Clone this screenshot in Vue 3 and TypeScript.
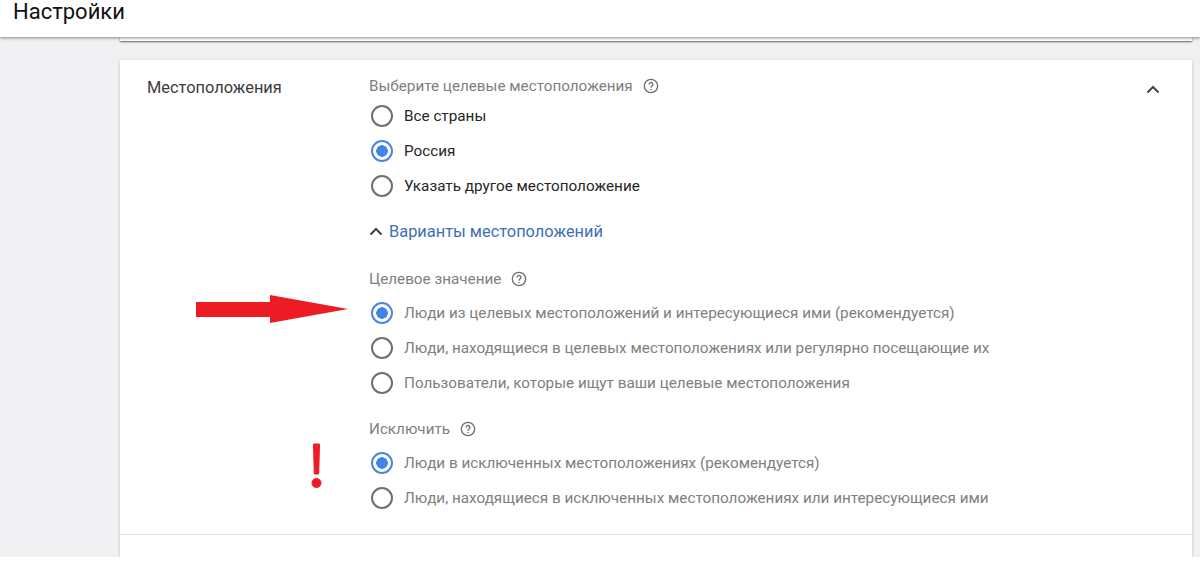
<script setup lang="ts">
interface Option {
  label: string;
  checked?: boolean;
}

const countries: Option[] = [
  { label: 'Все страны' },
  { label: 'Россия', checked: true },
  { label: 'Указать другое местоположение' },
];

const targets: Option[] = [
  { label: 'Люди из целевых местоположений и интересующиеся ими (рекомендуется)', checked: true },
  { label: 'Люди, находящиеся в целевых местоположениях или регулярно посещающие их' },
  { label: 'Пользователи, которые ищут ваши целевые местоположения' },
];

const excludes: Option[] = [
  { label: 'Люди в исключенных местоположениях (рекомендуется)', checked: true },
  { label: 'Люди, находящиеся в исключенных местоположениях или интересующиеся ими' },
];
</script>

<template>
  <div class="page">
    <header class="topbar">Настройки</header>
    <div class="content">
      <div class="prev-card"></div>
      <section class="card">
        <div class="card-main">
          <h2 class="card-title">Местоположения</h2>
          <div class="fields">
            <div class="field-label first">
              Выберите целевые местоположения
              <svg class="help" viewBox="0 0 24 24"><circle cx="12" cy="12" r="10" /><path d="M9.200 9.600a2.800 2.800 0 1 1 4.600 2.100c-1 .8-1.800 1.400-1.800 2.800M12 16.400v1.800" /></svg>
            </div>
            <label v-for="o in countries" :key="o.label" class="radio dark">
              <span class="dot" :class="{ on: o.checked }"></span>{{ o.label }}
            </label>
            <div class="more">
              <svg class="more-icon" viewBox="0 0 14 9"><path d="M1.500 7.500 7 2l5.500 5.500" /></svg>
              Варианты местоположений
            </div>
            <div class="field-label second">
              Целевое значение
              <svg class="help" viewBox="0 0 24 24"><circle cx="12" cy="12" r="10" /><path d="M9.200 9.600a2.800 2.800 0 1 1 4.600 2.100c-1 .8-1.800 1.400-1.800 2.800M12 16.400v1.800" /></svg>
            </div>
            <label v-for="o in targets" :key="o.label" class="radio">
              <span class="dot" :class="{ on: o.checked }"></span>{{ o.label }}
            </label>
            <div class="field-label third">
              Исключить
              <svg class="help" viewBox="0 0 24 24"><circle cx="12" cy="12" r="10" /><path d="M9.200 9.600a2.800 2.800 0 1 1 4.600 2.100c-1 .8-1.800 1.400-1.800 2.800M12 16.400v1.800" /></svg>
            </div>
            <label v-for="o in excludes" :key="o.label" class="radio">
              <span class="dot" :class="{ on: o.checked }"></span>{{ o.label }}
            </label>
          </div>
          <svg class="collapse" viewBox="0 0 14 9"><path d="M1.500 7.500 7 2l5.500 5.500" /></svg>
        </div>
        <div class="card-foot"></div>
      </section>
    </div>
    <!-- annotations drawn on top of the screenshot -->
    <svg class="arrow" viewBox="0 0 155 28"><path d="M1 7h74V0l78 14-78 14v-6H1z" /></svg>
    <svg class="bang" viewBox="0 0 11 45"><path d="M2.500 1h6l-.8 30H3.300z" /><circle cx="5.500" cy="40" r="4.500" /></svg>
  </div>
</template>

<style scoped>
.page {
  position: relative;
  height: 569px;
  overflow: hidden;
  background: #fff;
  font-family: Roboto, 'Noto Sans', sans-serif;
}

.topbar {
  position: relative;
  z-index: 2;
  height: 37px;
  padding-left: 13px;
  background: #fff;
  color: #111;
  font-size: 22px;
  line-height: 23px;
  box-shadow: 0 1px 3px rgba(0, 0, 0, 0.45);
}

.content {
  height: 520px;
  overflow: hidden;
  padding: 0 8px 0 120px;
  background: #f1f1f3;
}

.prev-card {
  height: 4px;
  background: #fff;
  box-shadow: 0 1px 2px rgba(0, 0, 0, 0.6);
}

.card {
  margin-top: 19px;
  background: #fff;
  box-shadow: 0 1px 3px rgba(0, 0, 0, 0.22);
}

.card-main {
  box-sizing: border-box;
  display: flex;
  height: 475px;
  padding: 16px 0 0 27px;
  border-bottom: 1px solid #e2e2e2;
}

.card-title {
  width: 222px;
  margin: 1px 0 0;
  color: #3c3c3c;
  font-size: 16.400px;
  font-weight: 400;
  line-height: 22px;
}

.fields {
  flex: 1;
}

.field-label {
  display: flex;
  align-items: center;
  gap: 10px;
  height: 20px;
  color: #808080;
  font-size: 15.250px;
}

.first {
  margin-bottom: 2px;
}

.second {
  margin: 21px 0 6px;
}

.third {
  margin: 19px 0 6px;
}

.help {
  width: 16px;
  height: 16px;
  fill: none;
  stroke: #6e6e6e;
  stroke-width: 2;
}

.radio {
  display: flex;
  align-items: center;
  gap: 11px;
  height: 35px;
  margin-left: 2px;
  color: #808080;
  font-size: 15.280px;
}

.radio.dark {
  color: #262626;
}

.dot {
  box-sizing: border-box;
  width: 22px;
  height: 22px;
  border: 2px solid #6e6e6e;
  border-radius: 50%;
}

.dot.on {
  border-color: #4a86e0;
  background: radial-gradient(circle, #3f82f1 0 5.500px, #fff 6px);
}

.more {
  display: flex;
  align-items: center;
  gap: 6px;
  height: 34px;
  margin-top: 11px;
  color: #3f6fb5;
  font-size: 16.400px;
}

.more-icon {
  width: 14px;
  height: 9px;
  fill: none;
  stroke: #444;
  stroke-width: 2;
}

.collapse {
  flex: none;
  width: 14px;
  height: 9px;
  margin: 9px 32px 0 0;
  fill: none;
  stroke: #444;
  stroke-width: 2;
}

.card-foot {
  height: 22px;
}

.arrow {
  position: absolute;
  left: 195px;
  top: 295px;
  width: 155px;
  height: 28px;
  fill: #ed1c24;
}

.bang {
  position: absolute;
  left: 311px;
  top: 443px;
  width: 11px;
  height: 45px;
  fill: #ed1c24;
  stroke: #ed1c24;
  stroke-linejoin: round;
}
</style>
